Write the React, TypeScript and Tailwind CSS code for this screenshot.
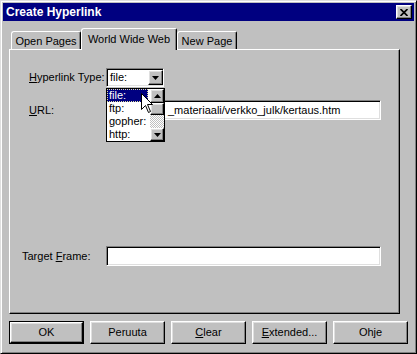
import React from "react";

const raised =
  "border border-t-white border-l-white border-r-black border-b-black shadow-[inset_-1px_-1px_0_#808080,inset_1px_1px_0_#dfdfdf]";
const sunken =
  "border border-t-[#808080] border-l-[#808080] border-r-white border-b-white shadow-[inset_1px_1px_0_#000,inset_-1px_-1px_0_#dfdfdf]";

function Down() {
  return (
    <svg width="7" height="4" viewBox="0 0 7 4">
      <polygon points="0,0 7,0 3.5,4" fill="#000" />
    </svg>
  );
}
function Up() {
  return (
    <svg width="7" height="4" viewBox="0 0 7 4">
      <polygon points="0,4 7,4 3.5,0" fill="#000" />
    </svg>
  );
}

function Btn({ children, def }: { children: React.ReactNode; def?: boolean }) {
  if (def) {
    return (
      <div className="w-[75px] h-[23px] border border-black flex">
        <div className={`flex-1 ${raised} bg-[#c0c0c0] flex items-center justify-center`}>{children}</div>
      </div>
    );
  }
  return (
    <div className={`w-[75px] h-[23px] ${raised} bg-[#c0c0c0] flex items-center justify-center`}>{children}</div>
  );
}

export default function App() {
  return (
    <div className="w-[417px] h-[354px] bg-[#c0c0c0] border border-t-[#dfdfdf] border-l-[#dfdfdf] border-r-black border-b-black shadow-[inset_1px_1px_0_#fff,inset_-1px_-1px_0_#808080] p-[2px] flex flex-col text-[11px] leading-none text-black font-['Liberation_Sans',Arial,sans-serif]">
      {/* Title bar */}
      <div className="h-[18px] bg-[#000080] flex items-center justify-between pl-[3px] pr-[2px]">
        <span className="text-white font-bold text-[12px]">Create Hyperlink</span>
        <div className={`w-[16px] h-[14px] ${raised} bg-[#c0c0c0] flex items-center justify-center`}>
          <svg width="8" height="7" viewBox="0 0 8 7">
            <path d="M0.5 0 L7.5 7 M7.5 0 L0.5 7" stroke="#000" strokeWidth="1.7" />
          </svg>
        </div>
      </div>

      {/* Tabs */}
      <div className="flex items-end ml-[8px] mt-[7px] h-[21px] relative z-10">
        <div className="w-[70px] h-[18px] bg-[#c0c0c0] border-t border-l border-r border-t-white border-l-white border-r-black shadow-[inset_-1px_0_0_#808080] rounded-tl-[3px] rounded-tr-[2px] flex items-center justify-center pt-[1px]">
          Open Pages
        </div>
        <div className="w-[96px] h-[22px] mb-[-1px] bg-[#c0c0c0] border-t border-l border-r border-t-white border-l-white border-r-black shadow-[inset_-1px_0_0_#808080] rounded-tl-[3px] rounded-tr-[2px] flex items-start justify-center pt-[5px]">
          World Wide Web
        </div>
        <div className="w-[60px] h-[18px] bg-[#c0c0c0] border-t border-l border-r border-t-white border-l-white border-r-black shadow-[inset_-1px_0_0_#808080] rounded-tl-[3px] rounded-tr-[2px] flex items-center justify-center pt-[1px]">
          New Page
        </div>
      </div>

      {/* Panel */}
      <div className="ml-[6px] w-[391px] h-[265px] bg-[#c0c0c0] border border-t-white border-l-white border-r-black border-b-black shadow-[inset_-1px_-1px_0_#808080] relative flex flex-col pt-[18px]">
        <div className="flex items-center h-[19px]">
          <span className="ml-[19px] w-[77px]">
            <span className="underline underline-offset-1">H</span>yperlink Type:
          </span>
          <div className={`w-[58px] h-[19px] ${sunken} bg-white flex items-center pl-[3px]`}>
            <span>file:</span>
            <div className={`ml-auto w-[15px] h-[15px] ${raised} bg-[#c0c0c0] flex items-center justify-center`}>
              <Down />
            </div>
          </div>
        </div>

        <div className="flex items-center h-[20px] mt-[13px]">
          <span className="ml-[19px] w-[77px]">
            <span className="underline underline-offset-1">U</span>RL:
          </span>
          <div className={`w-[275px] h-[20px] ${sunken} bg-white flex items-center pl-[61px] overflow-hidden whitespace-nowrap`}>
            _materiaali/verkko_julk/kertaus.htm
          </div>
        </div>

        <div className="flex items-center h-[20px] mt-[126px]">
          <span className="ml-[12px] w-[84px]">
            Target <span className="underline underline-offset-1">F</span>rame:
          </span>
          <div className={`w-[275px] h-[20px] ${sunken} bg-white`} />
        </div>

        {/* Dropdown list */}
        <div className="absolute left-[96px] top-[38px] w-[59px] h-[54px] bg-white border border-black flex">
          <div className="flex-1 flex flex-col">
            <div className="h-[13px] mr-[2px] bg-[#000080] text-white border border-dotted border-[#e0e0a0] flex items-center pl-[1px]">
              file:
            </div>
            <div className="h-[13px] flex items-center pl-[2px]">ftp:</div>
            <div className="h-[13px] flex items-center pl-[2px]">gopher:</div>
            <div className="h-[13px] flex items-center pl-[2px]">http:</div>
          </div>
          <div className="w-[14px] flex flex-col">
            <div className={`h-[14px] ${raised} bg-[#c0c0c0] flex items-center justify-center`}>
              <Up />
            </div>
            <div className={`h-[12px] ${raised} bg-[#c0c0c0]`} />
            <div className="flex-1 bg-[repeating-conic-gradient(#c0c0c0_0_25%,#ffffff_0_50%)] bg-[length:2px_2px]" />
            <div className={`h-[13px] ${raised} bg-[#c0c0c0] flex items-center justify-center`}>
              <Down />
            </div>
          </div>
        </div>

        {/* Mouse cursor */}
        <svg className="absolute left-[131px] top-[43px]" width="12" height="20" viewBox="0 0 12 20">
          <path d="M0.5 0.5 V16.5 L4.5 12.5 L7.5 19.5 L9.5 18.5 L6.5 11.5 L11.5 11.5 Z" fill="#fff" stroke="#000" strokeWidth="1" />
        </svg>
      </div>

      {/* Buttons */}
      <div className="flex gap-[6px] ml-[6px] mt-[7px]">
        <Btn def>OK</Btn>
        <Btn>Peruuta</Btn>
        <Btn>
          <span>
            <span className="underline underline-offset-1">C</span>lear
          </span>
        </Btn>
        <Btn>
          <span>
            <span className="underline underline-offset-1">E</span>xtended...
          </span>
        </Btn>
        <Btn>Ohje</Btn>
      </div>
    </div>
  );
}
